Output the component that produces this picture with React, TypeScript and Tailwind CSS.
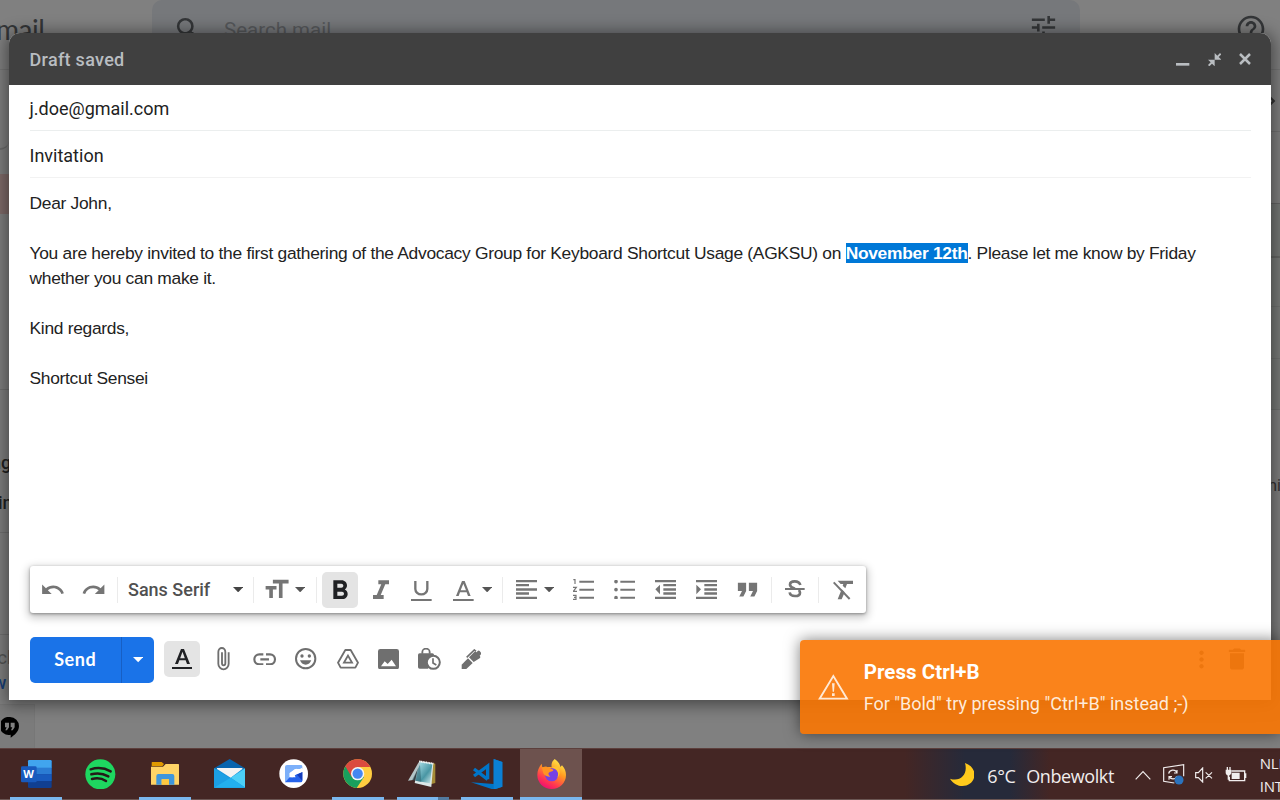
import React from "react";
import {
  MdUndo, MdRedo, MdFormatSize, MdFormatBold, MdFormatItalic, MdFormatQuote,
  MdDelete, MdMoreVert, MdTune, MdSearch, MdHelpOutline, MdChevronRight,
} from "react-icons/md";

/** Small drawing whose view box uses three units per pixel. */
function Glyph({ w, h, children, className = "" }: { w: number; h: number; children: React.ReactNode; className?: string }) {
  return (
    <svg className={`shrink-0 ${className}`} width={w / 3} height={h / 3} viewBox={`0 0 ${w} ${h}`} fill="currentColor">
      {children}
    </svg>
  );
}

const Caret = ({ className = "" }: { className?: string }) => (
  <Glyph w={31} h={16} className={className}><path d="M0 0h31L15.500 16z" /></Glyph>
);
const Sep = () => <div className="h-[26px] w-px shrink-0 bg-[#ebebeb]" />;
const Cell = ({ className, children }: { className: string; children: React.ReactNode }) => (
  <div className={`flex h-full shrink-0 items-center ${className}`}>{children}</div>
);

function FormatBar() {
  return (
    <div className="ml-[20.5px] flex h-[47px] w-[836px] shrink-0 items-center rounded-[3px] bg-white pl-[2.5px] text-[#757575] shadow-[0_1px_3px_rgba(0,0,0,0.35),0_3px_9px_2px_rgba(0,0,0,0.22)]">
      <Cell className="w-[41px] justify-center"><MdUndo size={25.5} /></Cell>
      <Cell className="w-[44px] pl-2"><MdRedo size={25.5} /></Cell>
      <Sep />
      <Cell className="w-[135px] justify-between pr-[10px] pl-[10px]">
        <span className="text-[18px] font-medium text-[#505050]">Sans Serif</span>
        <Caret className="text-[#444]" />
      </Cell>
      <Sep />
      <Cell className="w-[62px] gap-[4px] pl-[8px]">
        <MdFormatSize size={29} />
        <Caret className="text-[#555]" />
      </Cell>
      <Sep />
      <Cell className="w-[45px] pl-[5px]">
        <div className="flex size-9 items-center justify-center rounded-[5px] bg-[#e4e4e4] pt-[2px] text-[#202124]"><MdFormatBold size={32} /></div>
      </Cell>
      <Cell className="w-[38px] justify-center pt-[2px]"><MdFormatItalic size={32} /></Cell>
      <Cell className="w-[43px] justify-center pt-[3px]">
        <Glyph w={62} h={62}>
          <path d="M13 0v24a18 16 0 0 0 36 0V0" fill="none" stroke="currentColor" strokeWidth="7" />
          <path d="M0 54h62v7H0z" />
        </Glyph>
      </Cell>
      <Cell className="w-[59px] gap-[8px] pl-[10px]">
        <Glyph w={62} h={62} className="mt-[3px]">
          <path fillRule="evenodd" d="M27 0h8l18 45h-8l-4-11H21l-4 11H9zM31 8l-8 20h16z" />
          <path d="M0 54h62v7H0z" />
        </Glyph>
        <Caret className="text-[#555]" />
      </Cell>
      <Sep />
      <Cell className="w-[59px] gap-[7px] pl-[13px]">
        <Glyph w={63} h={58}>
          <path d="M0 0h63v7H0zM0 12h39v7H0zM0 25h63v7H0zM0 37h39v7H0zM0 50h63v7H0z" />
        </Glyph>
        <Caret className="text-[#555]" />
      </Cell>
      <Cell className="w-[42px] justify-center">
        <Glyph w={63} h={63}>
          <path d="M19 5h44v6H19zM19 29h44v6H19zM19 53h44v6H19z" />
          <path d="M1 2h5v13M0 25h10L1 37h11M0 49h9v12H0M3 55h6" fill="none" stroke="currentColor" strokeWidth="3.5" />
        </Glyph>
      </Cell>
      <Cell className="w-[41px] justify-center">
        <Glyph w={63} h={58}>
          <path d="M19 2h44v6H19zM19 26h44v6H19zM19 50h44v6H19z" />
          <circle cx="6" cy="5" r="5.5" /><circle cx="6" cy="29" r="5.5" /><circle cx="6" cy="53" r="5.5" />
        </Glyph>
      </Cell>
      <Cell className="w-[41px] justify-center">
        <Glyph w={63} h={58}>
          <path d="M0 0h63v7H0zM25 12h38v7H25zM25 25h38v7H25zM25 37h38v7H25zM0 50h63v7H0zM15 14v29L1 28z" />
        </Glyph>
      </Cell>
      <Cell className="w-[41px] justify-center">
        <Glyph w={63} h={58}>
          <path d="M0 0h63v7H0zM25 12h38v7H25zM25 25h38v7H25zM25 37h38v7H25zM0 50h63v7H0zM1 14v29l14-15z" />
        </Glyph>
      </Cell>
      <Cell className="w-[44px] pl-[1px] justify-center"><MdFormatQuote size={33} className="-ml-1" /></Cell>
      <Sep />
      <Cell className="w-[46px] justify-center pb-[2px]">
        <Glyph w={60} h={54}>
          <path d="M46 15C44 7 38 4 29 4c-9 0-14 4-14 10 0 7 7 9 15 12M41 30c4 3 4 5 4 8 0 7-6 10-15 10-9 0-15-4-16-11" fill="none" stroke="currentColor" strokeWidth="8" />
          <path d="M0 24h59v6H0z" />
        </Glyph>
      </Cell>
      <Sep />
      <Cell className="w-[46px] justify-center pl-[2px]">
        <Glyph w={62} h={60}>
          <path d="M14 2h47v10H42l-5 13-8-8 2-5H23zM26 28l9 9-9 21H14z" />
          <path d="M2 7l48 50" stroke="currentColor" strokeWidth="6" />
        </Glyph>
      </Cell>
    </div>
  );
}

function SendRow() {
  return (
    <div className="mt-6 ml-[20.5px] flex h-[46px] shrink-0 items-center text-[#6f6f6f]">
      <div className="flex h-full w-[124.5px] shrink-0 overflow-hidden rounded-[5px] bg-[#1a73e8] text-white">
        <div className="flex w-[92.500px] items-center justify-center border-r border-[#175fc4] pb-px font-['Lato','Roboto',sans-serif] text-[18px] font-bold tracking-[0.6px]">Send</div>
        <div className="flex flex-1 items-center justify-center"><Caret /></div>
      </div>
      <div className="mb-[2px] ml-[10px] flex size-9 items-center justify-center rounded-[5px] bg-[#e4e4e4] text-[#202124]">
        <Glyph w={62} h={62}>
          <path fillRule="evenodd" d="M27 0h9l18 45h-9l-4-11H22l-4 11H9zM31.500 8l-7 20h14z" />
          <path d="M0 54h62v7H0z" />
        </Glyph>
      </div>
      <Cell className="ml-[3.5px] w-[41px] justify-center pb-[2px]">
        <Glyph w={40} h={70}>
          <path d="M35 16v34a15.500 17 0 0 1-31 0V15a10.500 12 0 0 1 21 0v34a5 6 0 0 1-10 0V16" fill="none" stroke="currentColor" strokeWidth="5.500" />
        </Glyph>
      </Cell>
      <Cell className="w-[41px] justify-center pb-[2px]">
        <Glyph w={70} h={38}>
          <path d="M31 4H19a15 15 0 0 0 0 30h12M39 4h12a15 15 0 0 1 0 30H39M22 19h26" fill="none" stroke="currentColor" strokeWidth="6.500" />
        </Glyph>
      </Cell>
      <Cell className="w-[41px] justify-center pb-[2px]">
        <Glyph w={64} h={64}>
          <circle cx="32" cy="32" r="29" fill="none" stroke="currentColor" strokeWidth="6" />
          <circle cx="21" cy="24" r="5" /><circle cx="43" cy="24" r="5" />
          <path d="M15 37h34c-3 8-9 13-17 13s-14-5-17-13z" />
        </Glyph>
      </Cell>
      <Cell className="w-[42px] justify-center pb-[2px]">
        <Glyph w={66} h={60}>
          <path d="M25 3h16l22 38-8 15H11L3 41z" fill="none" stroke="currentColor" strokeWidth="5.500" strokeLinejoin="round" />
          <path d="M33 20l12 21H21z" fill="none" stroke="currentColor" strokeWidth="5.500" />
        </Glyph>
      </Cell>
      <Cell className="w-[41px] justify-center pb-[2px]">
        <Glyph w={64} h={62}>
          <path fillRule="evenodd" d="M7 0h49q7 0 7 7v47q0 7-7 7H7q-7 0-7-7V7q0-7 7-7zM9 52h45L41 32 29 45l-9-8z" />
        </Glyph>
      </Cell>
      <Cell className="w-[41px] justify-center pb-[2px]">
        <Glyph w={70} h={68}>
          <path d="M13 17v-5a11 10 0 0 1 22 0v5" fill="none" stroke="currentColor" strokeWidth="5.500" />
          <path d="M5 16h38q5 0 5 5v15L30 62H5q-5 0-5-5V21q0-5 5-5z" />
          <circle cx="46" cy="43" r="19.500" fill="#fff" stroke="currentColor" strokeWidth="6" />
          <path d="M45 31v14l10 6" fill="none" stroke="currentColor" strokeWidth="5" />
        </Glyph>
      </Cell>
      <Cell className="w-[41px] justify-center pb-[2px]">
        <Glyph w={62} h={62}>
          <path d="M2 60V47l19-19 14 14-19 18z" />
          <path d="M24 25l7-7L39 10q4-4 8 0l3-4q3-3 6 0l3 4q3 3 0 7l-3 3q4 4 0 8L38 39z" />
          <path d="M17 25l23-22 5 4" fill="none" stroke="currentColor" strokeWidth="5" />
        </Glyph>
      </Cell>
      <MdMoreVert size={27} className="mb-[2px] ml-[696px] text-[#777]" />
      <MdDelete size={28} className="mb-[2px] ml-[8px] text-[#777]" />
    </div>
  );
}

function Compose() {
  return (
    <div className="absolute top-[33px] left-[9px] flex h-[667px] w-[1262px] flex-col rounded-t-[11px] bg-white shadow-[0_2px_16px_3px_rgba(0,0,0,0.45)]">
      <div className="flex h-[52px] shrink-0 items-center rounded-t-[11px] bg-[#404040] pr-[20px] pl-[20.5px] text-[#b9bdc1]">
        <span className="flex-1 pt-px text-[18px] font-medium tracking-[0.3px]">Draft saved</span>
        <div className="flex items-center gap-[18px] pt-px">
          <Glyph w={40} h={40}><path d="M0 30h40v8H0z" /></Glyph>
          <Glyph w={40} h={40}>
            <path d="M20 0v20h20l-8-8 8-8-4-4-8 8zM20 40V20H0l8 8-8 8 4 4 8-8z" />
          </Glyph>
          <Glyph w={36} h={36}><path d="M3 3l30 30M33 3L3 33" stroke="currentColor" strokeWidth="7.500" /></Glyph>
        </div>
      </div>
      <div className="mx-[20.5px] flex h-[46px] shrink-0 items-center border-b border-[#ebeeee] pt-[2px] text-[18px] text-[#222]">
        <span>j.doe@gmail.com</span>
      </div>
      <div className="mx-[20.5px] flex h-[47px] shrink-0 items-center border-b border-[#f2f2f2] pt-[2px] text-[18px] text-[#222]">Invitation</div>
      <div className="mx-[20.5px] flex-1 pt-[13px] font-['Liberation_Sans',Arial,sans-serif] text-[17.4px] leading-[25px] tracking-[-0.29px] text-[#222]">
        <p>Dear John,</p>
        <p className="mt-[25px]">
          You are hereby invited to the first gathering of the Advocacy Group for Keyboard Shortcut Usage (AGKSU) on{" "}
          <b className="bg-[#0078d7] text-white">November 12th</b>. Please let me know by Friday whether you can make it.
        </p>
        <p className="mt-[25px]">Kind regards,</p>
        <p className="mt-[25px]">Shortcut Sensei</p>
      </div>
      <FormatBar />
      <SendRow />
      <div className="h-[17px] shrink-0" />
    </div>
  );
}

function Backdrop() {
  return (
    <div className="flex min-h-0 flex-1 flex-col overflow-hidden bg-[#808080]">
      <div className="flex h-[70px] shrink-0 border-b border-[#767676] text-[#343638]">
        <div className="w-[152px] font-['Lato',sans-serif] text-[28px] leading-[58px] tracking-[-0.5px]">
          <span className="-ml-[4px]">mail</span>
        </div>
        <div className="flex h-[58px] w-[928px] items-center rounded-[10px] bg-[#76787b] pr-[21px] pl-[21px]">
          <MdSearch size={31} />
          <span className="mt-[2px] ml-[20px] flex-1 font-['Roboto',sans-serif] text-[20.5px] text-[#56585b]">Search mail</span>
          <MdTune size={31} className="mb-[3px]" />
        </div>
        <MdHelpOutline size={32} className="mt-[13px] ml-[155px]" />
      </div>
      <div className="flex flex-1 justify-between">
        <div className="flex w-[35px] flex-col text-[18px] text-[#222]">
          <div className="h-[80px] w-[9px] rounded-br-[9px] border-b-2 border-[#6c6c6c]" />
          <div className="mt-[24px] h-[40px] bg-[#806c6a]" />
          <div className="h-[176px] border-b border-[#727272]" />
          <div className="h-[143px] overflow-hidden border-b border-[#727272] pt-[61px] font-medium leading-[24px]">
            <p className="-ml-[9px]">ng</p>
            <p className="mt-[16px] -ml-[8px]">ting</p>
          </div>
          <div className="h-[102px] border-b border-[#727272]" />
          <div className="h-[69px] shrink-0 pt-[10px] leading-[25px]">
            <p className="-ml-[12px] text-[#555]">ech</p>
            <p className="-ml-[7px] font-medium text-[#183f78]">w</p>
          </div>
          <div className="flex h-[44px] shrink-0 items-center border-t border-r border-[#777] bg-[#7b7b7b]">
            <Glyph w={56} h={66} className="mt-[3px] ml-[1px] text-black">
              <path d="M27 0a27 27 0 0 1 27 27c0 18-14 27-25 35v-9A27 27 0 1 1 27 0z" />
              <path d="M12 17h12v14l-6 9h-5l4-9h-5zM29 17h12v14l-6 9h-5l4-9h-5z" fill="#808080" />
            </Glyph>
          </div>
        </div>
        <div className="flex w-[14px] flex-col text-[#333]">
          <div className="flex h-[62px] items-center border-b border-[#737373]"><MdChevronRight size={26} className="-ml-[8px] shrink-0" /></div>
          <div className="h-[72px] border-b border-[#656565]" />
          <div className="h-[54px] border-b-2 border-[#656765] bg-[#757876]" />
          <div className="h-[49px] border-b border-[#6f7270] bg-[#787b79]" />
          <div className="h-[52px] border-b border-[#6f7270] bg-[#787b79]" />
          <div className="h-[51px] border-b border-[#6f7270] bg-[#787b79]" />
          <div className="pt-[64px] text-[16px] leading-[24px]"><span className="-ml-[3px]">min</span></div>
        </div>
      </div>
    </div>
  );
}

function Toast() {
  return (
    <div className="absolute top-[640px] right-0 flex h-[93.5px] w-[480.5px] rounded-l-[4px] bg-[rgba(249,118,2,0.9)] pl-[18.5px] text-white shadow-[0_0_15px_rgba(0,0,0,0.5)]">
      <Glyph w={92} h={78} className="mt-[34px] text-[#ffe9d5]">
        <path d="M46 6l41 68H5z" fill="none" stroke="currentColor" strokeWidth="5.500" />
        <path d="M42 28h8l-2 25h-4zM42 58h8v8h-8z" />
      </Glyph>
      <div className="ml-[15px] pt-[18px]">
        <div className="text-[20.5px] leading-[28px] font-bold tracking-[0.05px]">Press Ctrl+B</div>
        <div className="mt-[4px] text-[18px] leading-[27px] text-[#ffead8]">For "Bold" try pressing "Ctrl+B" instead ;-)</div>
      </div>
    </div>
  );
}

function TaskItem({ children, bar = false, active = false, split = false }: { children: React.ReactNode; bar?: boolean; active?: boolean; split?: boolean }) {
  return (
    <div className={`flex h-full w-[64.400px] shrink-0 flex-col items-center ${active ? "bg-[linear-gradient(90deg,transparent_1px,#6d524e_1px,#6d524e_63px,transparent_63px)]" : ""}`}>
      <div className="flex flex-1 items-center pt-[2px]">{children}</div>
      <div className={`h-[3px] ${active ? "w-[62px]" : "w-[52px]"} ${bar ? "bg-[#7ab7ee]" : ""} ${split ? "bg-[linear-gradient(90deg,#7ab7ee_41px,#527a9f_41px)]" : ""}`} />
    </div>
  );
}

function Taskbar() {
  return (
    <div className="flex h-[52px] shrink-0 items-center overflow-hidden border-t border-t-[#5c3f3c] bg-[#442624] bg-[linear-gradient(90deg,#442624_905px,#262a3a_965px,#262a3a_1010px,#442624_1050px)] pl-[4px] font-['Open_Sans','Noto_Sans',sans-serif] text-[#f1eded] shadow-[inset_0_-1px_0_#6b5653]">
      <TaskItem bar>
        <Glyph w={92} h={84}>
          <rect x="21" width="71" height="84" rx="4" fill="#103f91" />
          <path d="M25 0h63q4 0 4 4v20H21V4q0-4 4-4z" fill="#41a5ee" />
          <path d="M21 23h71v20H21z" fill="#2b7cd3" /><path d="M21 43h71v20H21z" fill="#185abd" />
          <rect y="19" width="47" height="48" rx="4" fill="#185abd" />
          <text x="23" y="54" textAnchor="middle" fontSize="33" fontWeight="700" fill="#fff">W</text>
        </Glyph>
      </TaskItem>
      <TaskItem>
        <Glyph w={92} h={92}>
          <circle cx="46" cy="46" r="45" fill="#1ed760" />
          <path d="M17 31c20-6 42-4 60 6M19 46c18-5 35-3 51 6M21 60c16-4 30-2 42 6" fill="none" stroke="#241a18" strokeWidth="7.500" strokeLinecap="round" />
        </Glyph>
      </TaskItem>
      <TaskItem bar>
        <Glyph w={86} h={70}>
          <path d="M0 14h36l8-8h38q2 0 2 2v60H0z" fill="#ffd466" />
          <path d="M2 2q0-2 2-2h28l7 6-5 7H2z" fill="#e09a00" />
          <path d="M16 68V42q0-6 6-6h42q6 0 6 6v26H54V52H32v16z" fill="#3e96dc" />
          <path d="M32 68V52h22v16z" fill="#ffc840" />
        </Glyph>
      </TaskItem>
      <TaskItem>
        <Glyph w={94} h={88}>
          <path d="M0 28L47 0l47 28z" fill="#0763ad" />
          <path d="M0 28h94v58H0z" fill="#1592da" />
          <path d="M0 28l94 58H0z" fill="#1b9fe4" />
          <path d="M9 27h76v3L50 56 9 30z" fill="#f3f3f3" />
          <path d="M94 28v58L50 56z" fill="#4ccff7" /><path d="M0 86L50 56l44 30z" fill="#22b0ee" />
        </Glyph>
      </TaskItem>
      <TaskItem>
        <Glyph w={88} h={88}>
          <circle cx="44" cy="44" r="43" fill="#fff" />
          <path d="M24 18h42q4 0 4 4v8H48L32 42v16L18 70V24q0-6 6-6z" fill="#7cb0fa" />
          <path d="M18 70l14-15h18l-4-8 24-8v26q0 5-5 5z" fill="#2563eb" />
          <path d="M54 47l16-8v26z" fill="#153cba" />
          <path d="M32 54V43l20-14 6 3 12-6v12L50 47l-9 8z" fill="#fff" />
        </Glyph>
      </TaskItem>
      <TaskItem bar>
        <Glyph w={88} h={88}>
          <circle cx="44" cy="44" r="43" fill="#ffcd40" />
          <path d="M44 44L7 22a43 43 0 0 0 34 65l22-33z" fill="#18a05d" />
          <path d="M7 22A43 43 0 0 1 82 24H44L26 54z" fill="#db4a3f" />
          <circle cx="44" cy="44" r="20" fill="#f4f4f4" /><circle cx="44" cy="44" r="15.500" fill="#4387f2" />
        </Glyph>
      </TaskItem>
      <TaskItem split>
        <Glyph w={86} h={84}>
          <defs><linearGradient id="note" x2="1" y2="1"><stop stopColor="#b9eaf2" /><stop offset=".6" stopColor="#4996a4" /><stop offset="1" stopColor="#d4ecec" /></linearGradient></defs>
          <path d="M74 9l8 2v58l-14 4z" fill="#a58b37" />
          <path d="M34 3l42 7-6 71-50-12z" fill="#dce8e8" />
          <path d="M34 6l39 6-7 58-43-8z" fill="url(#note)" />
          <path d="M32 7l5 3-22 50-15 2z" fill="#b5c6c8" />
          <path d="M36 14L12 60l28 6z" fill="#285b68" opacity=".5" />
          <path d="M34 4l42 7" stroke="#f8f8f8" strokeWidth="6" strokeDasharray="3 2" />
        </Glyph>
      </TaskItem>
      <TaskItem bar>
        <Glyph w={94} h={92}>
          <path d="M68 0l26 9v74L68 92 0 70l68 5z" fill="#0075c8" />
          <path d="M9 30L50 61M9 51L50 21v40" fill="none" stroke="#0075c8" strokeWidth="10" />
          <path d="M68 0l26 9v74l-26 9z" fill="#0b80d4" />
        </Glyph>
      </TaskItem>
      <TaskItem bar active>
        <Glyph w={88} h={90}>
          <defs><linearGradient id="fox" x1=".8" x2=".25" y2="1"><stop stopColor="#fff44f" /><stop offset=".4" stopColor="#ff9a20" /><stop offset=".75" stopColor="#ff3750" /><stop offset="1" stopColor="#eb0878" /></linearGradient></defs>
          <path d="M53 0c11 7 16 16 17 24l5-5c8 9 12 18 12 29a43 42 0 0 1-86 0C1 34 6 24 14 14l2 12c6-3 11-3 15-1 5-1 8-2 13 0-2-10 1-18 9-25z" fill="url(#fox)" />
          <circle cx="44" cy="47" r="20" fill="#7542e5" />
          <path d="M14 25c9-4 19-2 26 3 5 3 9 3 9 6s-10 4-14 8c-2 3 1 8 5 11-11 2-18-5-21-10z" fill="#ff9422" />
          <path d="M44 27c16 0 24 14 17 29 10-10 10-24-1-36z" fill="#ffc331" />
        </Glyph>
      </TaskItem>

      <Glyph w={74} h={72} className="ml-[366px]">
        <path d="M45 0c21 7 33 25 27 45C64 73 20 80 0 47c30 11 55-12 45-47z" fill="#ffca1c" />
      </Glyph>
      <span className="ml-[13px] w-[39px] shrink-0 pt-[3px] text-[18px] tracking-[-0.3px] whitespace-nowrap">6°C</span>
      <span className="w-[108.500px] shrink-0 pt-[3px] text-[18px] tracking-[-0.4px] whitespace-nowrap">Onbewolkt</span>
      <Glyph w={48} h={30}><path d="M2 28L24 5l22 23" fill="none" stroke="currentColor" strokeWidth="3.500" /></Glyph>
      <Glyph w={66} h={62} className="ml-[12px]">
        <path d="M34 57L2 52V11l60-9v35" fill="none" stroke="currentColor" strokeWidth="3.500" />
        <path d="M17 29c2-13 20-14 25-3M42 18v9h-9M41 37c-3 10-18 11-23 0M18 47v-9h9" fill="none" stroke="currentColor" strokeWidth="3.500" />
        <circle cx="48" cy="48" r="13.500" fill="#2b73bd" />
      </Glyph>
      <Glyph w={56} h={48} className="ml-[10px]">
        <path d="M2 17h8L23 3v42L10 32H2zM32 16l19 18M51 16L32 34" fill="none" stroke="currentColor" strokeWidth="3.500" />
      </Glyph>
      <Glyph w={64} h={46} className="ml-[12px]">
        <path d="M19 12h40v29H13V30M62 19v14" fill="none" stroke="currentColor" strokeWidth="4" />
        <path d="M20 17h24v19H20zM2 8h17v11q-3 7-9 7t-8-7zM5 0h4v10H5zM13 0h4v10h-4zM8 24h5v14H8z" />
      </Glyph>
      <div className="ml-[13px] w-[40px] shrink-0 text-[15px] leading-[23px] tracking-[-0.2px]"><div>NLD</div><div>INTL</div></div>
    </div>
  );
}

export default function App() {
  return (
    <div className="relative flex h-[800px] w-[1280px] flex-col overflow-hidden font-['Roboto',sans-serif]">
      <Backdrop />
      <Compose />
      <Toast />
      <Taskbar />
    </div>
  );
}
